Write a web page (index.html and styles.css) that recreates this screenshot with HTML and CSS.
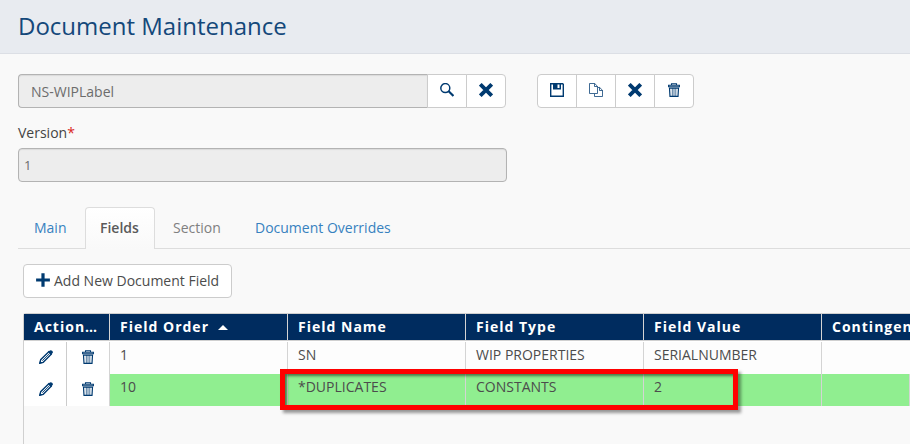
FILE: index.html
```html
<!DOCTYPE html>
<html lang="en">
<head>
<meta charset="utf-8">
<title>Document Maintenance</title>
<link rel="stylesheet" href="styles.css">
</head>
<body>
<svg class="defs" width="0" height="0" aria-hidden="true">
  <symbol id="search" viewBox="0 0 14 14"><circle cx="5.3" cy="5.1" r="4.5" fill="none" stroke="currentColor" stroke-width="1.5"/><path d="M8.4 8.1 13.4 13" stroke="currentColor" stroke-width="2.1"/></symbol>
  <symbol id="cross" viewBox="0 0 14 14"><path d="M1.3 1.3 12.7 12.7M12.7 1.3 1.3 12.7" stroke="currentColor" stroke-width="3.8"/></symbol>
  <symbol id="save" viewBox="0 0 14 14"><path d="M.7.7H12.6L13.3 1.4V13.3H.7Z" fill="none" stroke="currentColor" stroke-width="1.4"/><path fill="currentColor" fill-rule="evenodd" d="M3 0H11V6.5H3ZM7.5 1V5H9.5V1Z"/></symbol>
  <symbol id="copy" viewBox="0 0 14 14"><path d="M5.5 10.5H.5V.5H5.7L8.4 3.2V4.5M5.5.5V3.5H8.5M5.5 10.5V13.5H13.5V7.3L10.7 4.5H8.5V10.5H5.5M10.5 4.5V7.5H13.5" fill="none" stroke="currentColor" stroke-width=".75"/></symbol>
  <symbol id="trash" viewBox="0 0 12 14"><path d="M3.5 2V.7H8.5V2M.6 3.7V2.2H11.4V3.7Z" fill="none" stroke="currentColor" stroke-width="1.1"/><path d="M1.5 5.2H10.5L10 13.3H2Z" fill="none" stroke="currentColor" stroke-width="1.2"/><path d="M4.3 5V13M6 5V13M7.8 5V13" stroke="currentColor" stroke-width=".7"/></symbol>
  <symbol id="pencil" viewBox="0 0 14 14"><path d="M.8 13.2 1.7 9.7 9.8 1.8 12.2 4.2 4.2 12.3Z" fill="none" stroke="currentColor" stroke-width="1.35"/><path d="M3.3 10.7 10.3 3.8" stroke="currentColor" stroke-width=".9"/><path d="M9 2.1 10.9.4Q12-.3 13.1.8 14.4 2 13.6 3.1L12 5ZM.3 13.8 1 10.8 3.2 13Z" fill="currentColor"/></symbol>
  <symbol id="plus" viewBox="0 0 14 14"><path d="M7 .2V13.8M.1 7H13.9" stroke="currentColor" stroke-width="3.2"/></symbol>
</svg>
<header class="page-header"><h1>Document Maintenance</h1></header>
<main>
  <div class="toolbar">
    <div class="lookup">
      <div class="field lookup-value">NS-WIPLabel</div>
      <button class="tool"><svg width="14" height="14"><use href="#search"/></svg></button>
      <button class="tool"><svg width="14" height="14"><use href="#cross"/></svg></button>
    </div>
    <div class="actions">
      <button class="tool"><svg width="14" height="14"><use href="#save"/></svg></button>
      <button class="tool"><svg width="14" height="14"><use href="#copy"/></svg></button>
      <button class="tool"><svg width="14" height="14"><use href="#cross"/></svg></button>
      <button class="tool"><svg width="12" height="14"><use href="#trash"/></svg></button>
    </div>
  </div>
  <div class="label">Version<span class="required">*</span></div>
  <div class="field version">1</div>
  <nav class="tabs">
    <a class="tab">Main</a><a class="tab active">Fields</a><a class="tab disabled">Section</a><a class="tab overrides">Document Overrides</a>
  </nav>
  <button class="add"><svg width="14" height="14"><use href="#plus"/></svg><span>Add New Document Field</span></button>
  <section class="grid">
    <div class="row head">
      <div class="cell">Action…</div>
      <div class="cell">Field Order<i class="sort"></i></div>
      <div class="cell">Field Name</div>
      <div class="cell">Field Type</div>
      <div class="cell">Field Value</div>
      <div class="cell">Contingency</div>
    </div>
    <div class="rows">
      <div class="row">
        <div class="icons"><span><svg width="14" height="14"><use href="#pencil"/></svg></span><span><svg width="12" height="14"><use href="#trash"/></svg></span></div>
        <div class="cell">1</div><div class="cell">SN</div><div class="cell">WIP PROPERTIES</div><div class="cell">SERIALNUMBER</div><div class="cell"></div>
      </div>
      <div class="row selected">
        <div class="icons"><span><svg width="14" height="14"><use href="#pencil"/></svg></span><span><svg width="12" height="14"><use href="#trash"/></svg></span></div>
        <div class="cell">10</div><div class="cell">*DUPLICATES</div><div class="cell">CONSTANTS</div><div class="cell">2</div><div class="cell"></div>
        <div class="highlight"></div>
      </div>
    </div>
  </section>
</main>
</body>
</html>
```
FILE: styles.css
```css
* { box-sizing: border-box; }
body {
  margin: 0;
  height: 444px;
  overflow: hidden;
  background: #f9f9f9;
  color: #4c4c4c;
  font: 14px/20px "Open Sans", sans-serif;
}
button { font: inherit; color: inherit; padding: 0; }
svg { display: block; color: #003a70; }
.defs { position: absolute; }
.page-header {
  height: 54px;
  padding: 9px 18px 0;
  background: #e8ebf0;
  border-bottom: 1px solid #dcdfe5;
}
h1 { margin: 0; font-size: 24px; line-height: 34px; font-weight: 400; color: #14487a; }
main { padding: 20px 0 0 18px; }
.toolbar { display: flex; gap: 31px; }
.lookup { display: flex; width: 488px; }
.actions { display: flex; }
.field {
  height: 34px;
  border: 1px solid #b3b3b3;
  border-radius: 4px;
  background: #ededed;
  box-shadow: inset 0 1px 1px rgba(0, 0, 0, .08);
  color: #6c6c6c;
  line-height: 34px;
}
.lookup-value { flex: 1; padding-left: 12px; border-right: 0; border-radius: 4px 0 0 4px; }
.tool {
  display: flex;
  justify-content: center;
  width: 40px;
  height: 34px;
  margin-left: -1px;
  padding-top: 8px;
  background: #fff;
  border: 1px solid #ccc;
}
.lookup .tool:nth-child(2) { margin-left: 0; }
.tool:first-child { margin-left: 0; border-radius: 4px 0 0 4px; }
.tool:last-child { border-radius: 0 4px 4px 0; }
.label { margin-top: 15px; height: 25px; color: #444; font-weight: 500; }
.required { color: #d9261c; }
.version { width: 489px; padding-left: 5px; font-size: 13px; line-height: 33px; }
.tabs {
  display: flex;
  height: 42px;
  margin-top: 25px;
  border-bottom: 1px solid #ddd;
}
.tab { height: 42px; padding: 11px 16px 0; color: #3781bf; }
.tab:first-child { width: 67px; }
.tab.active {
  width: 70px;
  padding: 10px 14px 0;
  border: 1px solid #ddd;
  border-bottom: 0;
  border-radius: 4px 4px 0 0;
  background: linear-gradient(#fff, #f9f9f9);
  color: #5a5a5a;
  font-weight: 600;
}
.tab.disabled { width: 84px; padding-left: 18px; color: #808080; }
.tab.overrides { padding-left: 16px; }
.add {
  display: flex;
  gap: 4px;
  width: 209px;
  height: 34px;
  margin: 15px 0 0 5px;
  padding: 8px 0 0 12px;
  border: 1px solid #ccc;
  border-radius: 4px;
  background: #fff;
  line-height: 16px;
  white-space: nowrap;
}
.grid {
  height: 150px;
  margin: 15px 0 0 5px;
  border: solid #d0d0d0;
  border-width: 1px 0 0 1px;
  border-radius: 3px 0 0;
}
.row {
  display: grid;
  grid-template-columns: 86px repeat(4, 178px) 1fr;
  height: 32px;
  position: relative;
  background: #fdfdfd;
}
.cell {
  min-width: 0;
  padding: 3px 0 0 10px;
  border-right: 1px solid #d4d4d4;
  overflow: hidden;
  white-space: nowrap;
}
.cell:last-of-type { border-right: 0; }
.head {
  height: 27px;
  background: #002c5f;
  border-bottom: 1px solid #d0d0d0;
  color: #fff;
  font-weight: 700;
  letter-spacing: 1px;
}
.sort {
  display: inline-block;
  margin: 0 0 2px 9px;
  border: solid transparent;
  border-width: 0 5px 5px;
  border-bottom-color: #fff;
}
.rows { padding-top: 1px; background: #fff; }
.selected { background: #90ee90; }
.icons { display: flex; background: #fff; border-right: 1px solid #d4d4d4; }
.icons span { display: flex; width: 43px; padding: 8px 0 0 15px; border-right: 1px solid #ccc; }
.icons span + span { border: 0; }
.highlight {
  position: absolute;
  left: 256px;
  top: -5px;
  width: 458px;
  height: 41px;
  border: 5px solid #f00;
  box-shadow: 3px 3px 3px rgba(0, 0, 0, .4), inset 2px 2px 3px rgba(0, 0, 0, .5);
}
```
